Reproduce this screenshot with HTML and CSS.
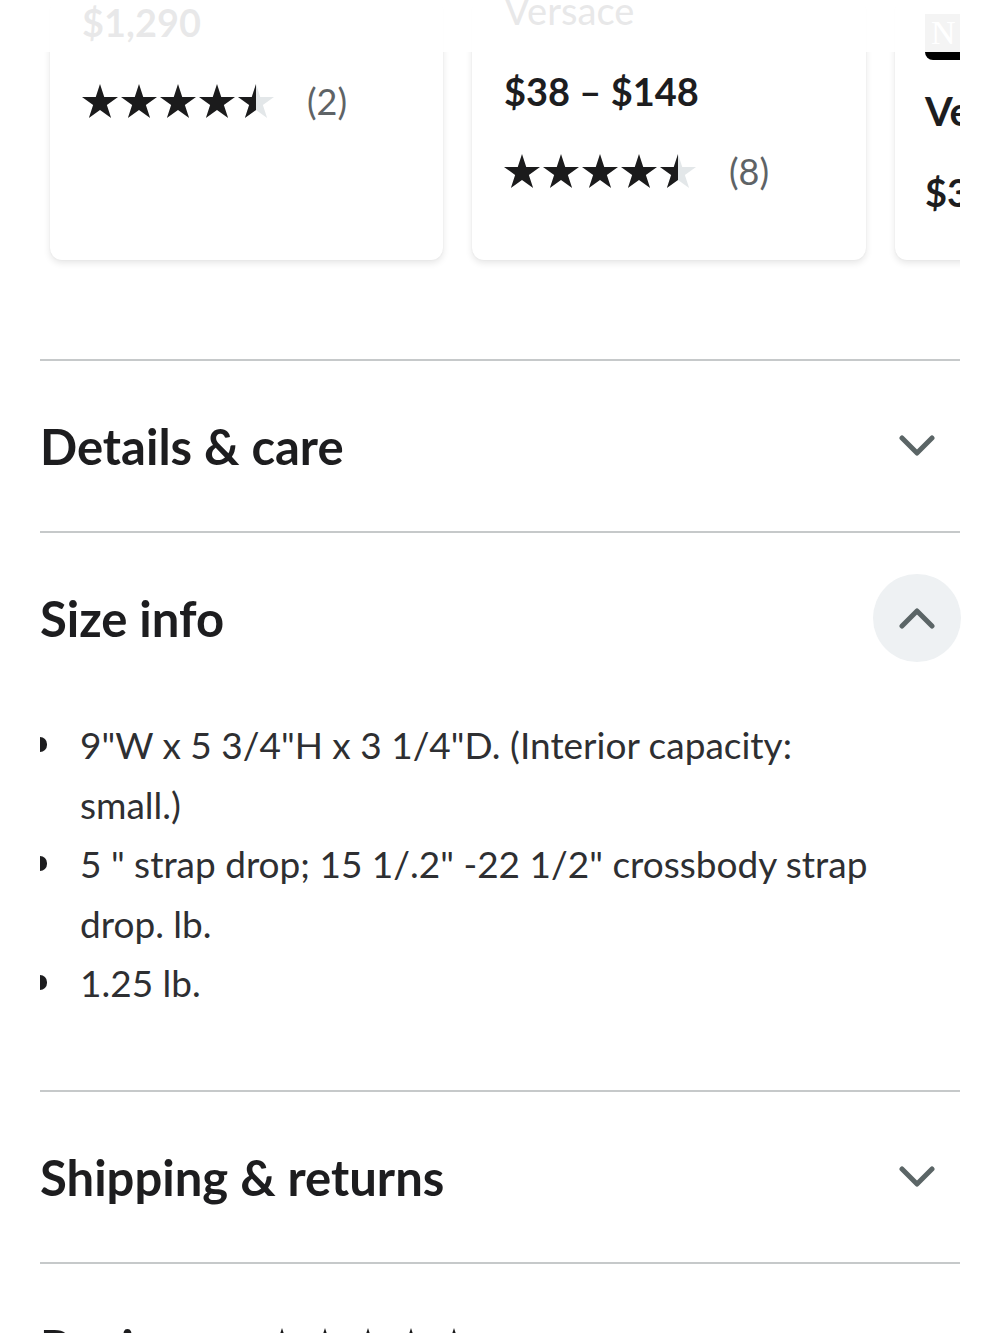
FILE: index.html
```html
<!DOCTYPE html>
<html lang="en">
<head>
<meta charset="utf-8">
<title>Size info</title>
<link rel="stylesheet" href="styles.css">
</head>
<body>
<svg class="defs" width="0" height="0" aria-hidden="true">
  <defs>
    <symbol id="star" viewBox="0 0 24 24">
      <path d="M12 0.6L14.83 9.3L24 9.3L16.58 14.7L19.42 23.4L12 18L4.58 23.4L7.42 14.7L0 9.3L9.17 9.3Z"/>
    </symbol>
    <clipPath id="halfclip"><rect x="0" y="0" width="18" height="36"/></clipPath>
  </defs>
</svg>

<div class="page">
  <div class="carousel">
    <div class="track">
      <div class="card c1">
        <div class="price faded-price">$1,290</div>
        <div class="rating">
          <svg class="stars" width="195" height="36" viewBox="0 0 195 36">
            <use href="#star" x="0" width="36" height="36" fill="#1b1b1c"/>
            <use href="#star" x="39" width="36" height="36" fill="#1b1b1c"/>
            <use href="#star" x="78" width="36" height="36" fill="#1b1b1c"/>
            <use href="#star" x="117" width="36" height="36" fill="#1b1b1c"/>
            <g transform="translate(156,0)">
              <use href="#star" width="36" height="36" fill="#e3e7e9"/>
              <use href="#star" width="36" height="36" fill="#1b1b1c" clip-path="url(#halfclip)"/>
            </g>
          </svg>
          <span class="count">(2)</span>
        </div>
      </div>
      <div class="card c2">
        <div class="brand">Versace</div>
        <div class="price">$38 – $148</div>
        <div class="rating">
          <svg class="stars" width="195" height="36" viewBox="0 0 195 36">
            <use href="#star" x="0" width="36" height="36" fill="#1b1b1c"/>
            <use href="#star" x="39" width="36" height="36" fill="#1b1b1c"/>
            <use href="#star" x="78" width="36" height="36" fill="#1b1b1c"/>
            <use href="#star" x="117" width="36" height="36" fill="#1b1b1c"/>
            <g transform="translate(156,0)">
              <use href="#star" width="36" height="36" fill="#e3e7e9"/>
              <use href="#star" width="36" height="36" fill="#1b1b1c" clip-path="url(#halfclip)"/>
            </g>
          </svg>
          <span class="count">(8)</span>
        </div>
      </div>
      <div class="card c3">
        <div class="thumb"><span class="logo">N</span></div>
        <div class="name">Versace Medusa</div>
        <div class="price">$38 – $148</div>
      </div>
    </div>
    <div class="fade"></div>
  </div>

  <section class="acc-item">
    <div class="acc-head">
      <h2 class="acc-title">Details &amp; care</h2>
      <span class="acc-btn">
        <svg width="36" height="24" viewBox="0 0 36 24"><path d="M3 4 L18 19 L33 4" fill="none" stroke="#5b6566" stroke-width="5" stroke-linecap="round" stroke-linejoin="round"/></svg>
      </span>
    </div>
  </section>

  <section class="acc-item open">
    <div class="acc-head">
      <h2 class="acc-title">Size info</h2>
      <span class="acc-btn active">
        <svg width="36" height="24" viewBox="0 0 36 24"><path d="M3 20 L18 5 L33 20" fill="none" stroke="#5b6566" stroke-width="5" stroke-linecap="round" stroke-linejoin="round"/></svg>
      </span>
    </div>
    <ul class="size-list">
      <li>9"W x 5 3/4"H x 3 1/4"D. (Interior capacity: small.)</li>
      <li>5 " strap drop; 15 1/.2" -22 1/2" crossbody strap drop. lb.</li>
      <li>1.25 lb.</li>
    </ul>
  </section>

  <section class="acc-item">
    <div class="acc-head">
      <h2 class="acc-title">Shipping &amp; returns</h2>
      <span class="acc-btn">
        <svg width="36" height="24" viewBox="0 0 36 24"><path d="M3 4 L18 19 L33 4" fill="none" stroke="#5b6566" stroke-width="5" stroke-linecap="round" stroke-linejoin="round"/></svg>
      </span>
    </div>
  </section>

  <section class="acc-item last">
    <div class="acc-head rev-head">
      <h2 class="acc-title">Reviews</h2>
      <svg class="rev-stars" width="215" height="40" viewBox="0 0 215 40">
        <use href="#star" x="0" width="40" height="40" fill="#1b1b1c"/>
        <use href="#star" x="43" width="40" height="40" fill="#1b1b1c"/>
        <use href="#star" x="86" width="40" height="40" fill="#1b1b1c"/>
        <use href="#star" x="129" width="40" height="40" fill="#1b1b1c"/>
        <use href="#star" x="172" width="40" height="40" fill="#1b1b1c"/>
      </svg>
    </div>
  </section>
</div>
</body>
</html>
```

FILE: styles.css
```css
* { box-sizing: border-box; }

html, body {
  margin: 0;
  padding: 0;
  background: #ffffff;
}

body {
  font-family: "Lato", "Open Sans", sans-serif;
  color: #1d1d1f;
  overflow: hidden;
  height: 1333px;
}

.defs {
  position: absolute;
  width: 0;
  height: 0;
}

.page {
  padding: 0 40px;
}

/* ---------- carousel ---------- */
.carousel {
  height: 359px;
  overflow: hidden;
}

.track {
  display: flex;
  gap: 29px;
  padding-left: 10px;
  align-items: flex-start;
}

.card {
  flex-shrink: 0;
  width: 393px;
  height: 260px;
  background: #fff;
  border-radius: 12px;
  box-shadow: 0 3px 7px rgba(0, 0, 0, 0.10), 0 0 2px rgba(0, 0, 0, 0.05);
  padding: 0 32px;
}

.c2 { width: 394px; }

.price {
  font-size: 38px;
  font-weight: 700;
  line-height: 44px;
  color: #1d1d1f;
  white-space: nowrap;
}

.faded-price { margin-top: 0; }

.brand {
  font-size: 38px;
  font-weight: 500;
  line-height: 44px;
  margin-top: -12px;
  color: #1d1d1f;
}

.c2 .price { margin-top: 37px; }

.rating {
  display: flex;
  align-items: center;
  gap: 30px;
  height: 38px;
}

.c1 .rating { margin-top: 38px; }
.c2 .rating { margin-top: 39px; }

.stars { display: block; }

.count {
  font-size: 36px;
  color: #5e6366;
  line-height: 38px;
}

.c3 { padding: 0 30px; }

.thumb {
  height: 60px;
  background: #ffffff;
  border-bottom: 8px solid #000;
  border-bottom-left-radius: 8px;
  position: relative;
  padding-top: 14px;
}

.logo {
  display: block;
  width: 40px;
  height: 38px;
  background: #8c8c8c;
  color: #fff;
  font-family: "Liberation Serif", serif;
  font-size: 34px;
  line-height: 38px;
  padding-left: 6px;
}

.c3 .name {
  font-size: 40px;
  font-weight: 700;
  line-height: 44px;
  margin-top: 29px;
  white-space: nowrap;
}

.c3 .price { margin-top: 37px; }

.fade {
  position: absolute;
  top: 0;
  left: 0;
  width: 1000px;
  height: 52px;
  background: rgba(255, 255, 255, 0.9);
}

/* ---------- accordion ---------- */
.acc-item {
  border-top: 2px solid #c6c9ca;
}

.acc-head {
  height: 170px;
  display: flex;
  align-items: center;
  justify-content: space-between;
}

.acc-item.last .acc-head {
  height: 120px;
}

.rev-head {
  justify-content: flex-start;
  gap: 42px;
  align-items: flex-start;
  padding-top: 54px;
}

.acc-title {
  margin: 0;
  font-size: 49px;
  font-weight: 700;
  color: #1d1d1f;
}

.acc-btn {
  width: 88px;
  height: 88px;
  border-radius: 50%;
  display: flex;
  align-items: center;
  justify-content: center;
  margin-right: -1px;
}

.acc-btn.active {
  background: #eef1f3;
}

.acc-btn svg { display: block; }

.rev-stars {
  display: block;
  margin-top: 9px;
}

.size-list {
  list-style: none;
  margin: 12px 0 0;
  padding: 0 0 77px;
}

.size-list li {
  position: relative;
  padding-left: 40px;
  padding-right: 60px;
  font-size: 37px;
  line-height: 59.5px;
  color: #2e2f32;
}

.size-list li::before {
  content: "";
  position: absolute;
  left: 0;
  top: 22px;
  width: 7px;
  height: 15px;
  background: #1d1d1f;
  border-radius: 0 8px 8px 0;
}
```
